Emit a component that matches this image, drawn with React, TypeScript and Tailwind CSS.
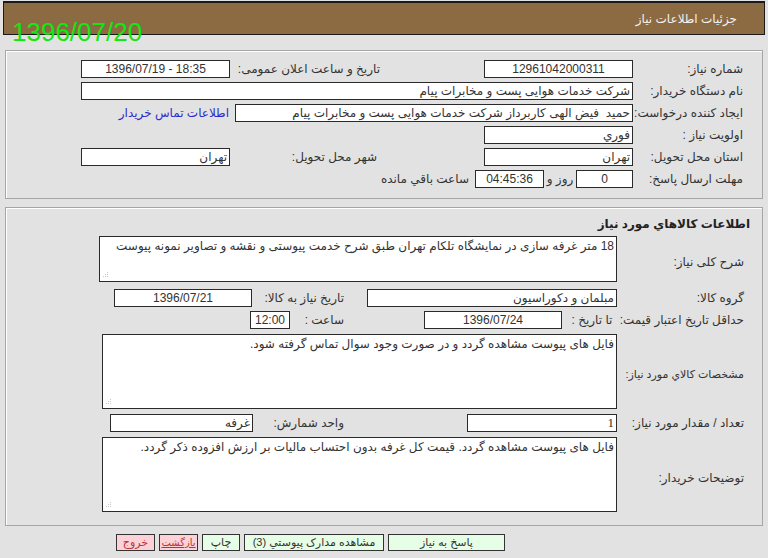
import React from "react";

const FONT = { fontFamily: '"Liberation Sans", "DejaVu Sans", sans-serif' };

function Grip() {
  return (
    <svg width="8" height="8" viewBox="0 0 8 8" className="absolute left-[2px] bottom-[2px]">
      <g fill="#c8c8c8">
        <rect x="5" y="1" width="1" height="1" />
        <rect x="3" y="3" width="1" height="1" />
        <rect x="5" y="3" width="1" height="1" />
        <rect x="1" y="5" width="1" height="1" />
        <rect x="3" y="5" width="1" height="1" />
        <rect x="5" y="5" width="1" height="1" />
      </g>
    </svg>
  );
}

function Field({ className, children, center }: { className: string; children?: React.ReactNode; center?: boolean }) {
  return (
    <div
      className={`h-[18px] shrink-0 bg-white border border-[#2a2a2a] flex items-center px-[2px] text-[12px] text-[#333] overflow-hidden whitespace-pre ${
        center ? "justify-center" : "justify-start"
      } ${className}`}
    >
      {children}
    </div>
  );
}

function Area({ className, children }: { className: string; children?: React.ReactNode }) {
  return (
    <div className={`relative shrink-0 bg-white border border-[#2a2a2a] px-[2px] pt-[1px] text-[12px] leading-[16px] text-[#333] ${className}`}>
      {children}
      <Grip />
    </div>
  );
}

function Label({ className, children }: { className: string; children: React.ReactNode }) {
  return <div className={`shrink-0 text-[#333] whitespace-nowrap ${className}`}>{children}</div>;
}

export default function App() {
  return (
    <div dir="rtl" style={FONT} className="relative w-[768px] h-[558px] bg-[#e2e2e2] overflow-hidden">
      {/* header */}
      <div className="mx-[3px] mt-[1px] h-[34px] bg-[#8c6a42] border border-[#1a1a1a] border-t-2 flex items-center pr-[27px]">
        <span className="text-[12px] text-[#f2f2f2]">جزئیات اطلاعات نیاز</span>
      </div>
      <div dir="ltr" className="absolute left-[12px] top-[17px] text-[26px] leading-[30px] text-[#14e614]">
        1396/07/20
      </div>

      {/* panel 1 */}
      <div className="mx-[5px] mt-[15px] h-[149px] border border-[#a6a6a6] shadow-[inset_1px_1px_0_#fff] pr-[19px] pt-[9px] flex flex-col">
        <div className="h-[22px] flex items-start">
          <Label className="w-[110px] text-[12px] leading-[18px]">شماره نیاز:</Label>
          <Field className="w-[149px]" center>
            <span dir="ltr">12961042000311</span>
          </Field>
          <div className="w-[104px] shrink-0" />
          <Label className="w-[145px] text-[12px] leading-[18px]">تاریخ و ساعت اعلان عمومی:</Label>
          <Field className="w-[149px] mr-[5px]" center>
            <span dir="ltr">1396/07/19 - 18:35</span>
          </Field>
        </div>
        <div className="h-[22px] flex items-start">
          <Label className="w-[110px] text-[12px] leading-[18px]">نام دستگاه خریدار:</Label>
          <Field className="w-[552px]">شرکت خدمات هوایی پست و مخابرات پیام</Field>
        </div>
        <div className="h-[22px] flex items-start">
          <Label className="w-[110px] text-[12px] leading-[18px]">ایجاد کننده درخواست:</Label>
          <Field className="w-[398px]">{"حمید  فیض الهی کاربرداز شرکت خدمات هوایی پست و مخابرات پیام"}</Field>
          <span className="mr-[6px] text-[12px] leading-[18px] text-[#2b2bd0] whitespace-nowrap">اطلاعات تماس خریدار</span>
        </div>
        <div className="h-[22px] flex items-start">
          <Label className="w-[110px] text-[12px] leading-[18px]">اولویت نیاز :</Label>
          <Field className="w-[149px]">فوري</Field>
        </div>
        <div className="h-[22px] flex items-start">
          <Label className="w-[110px] text-[12px] leading-[18px]">استان محل تحویل:</Label>
          <Field className="w-[149px]">تهران</Field>
          <div className="w-[107px] shrink-0" />
          <Label className="w-[142px] text-[12px] leading-[18px]">شهر محل تحویل:</Label>
          <Field className="w-[149px] mr-[5px]">تهران</Field>
        </div>
        <div className="h-[22px] flex items-start">
          <Label className="w-[110px] text-[12px] leading-[18px]">مهلت ارسال پاسخ:</Label>
          <Field className="w-[57px]" center>
            0
          </Field>
          <Label className="w-[32px] text-[12px] leading-[18px] text-center">روز و</Label>
          <Field className="w-[69px]" center>
            <span dir="ltr">04:45:36</span>
          </Field>
          <Label className="mr-[6px] text-[12px] leading-[18px]">ساعت باقي مانده</Label>
        </div>
      </div>

      {/* panel 2 */}
      <div className="mx-[5px] mt-[8px] h-[319px] border border-[#a6a6a6] shadow-[inset_1px_1px_0_#fff] pr-[12px] pt-[5px] flex flex-col">
        <div className="h-[22px] leading-[22px] text-[12px] font-bold text-[#222] mb-[1px]">اطلاعات کالاهاي مورد نياز</div>
        <div className="pr-[6px] flex flex-col">
          <div className="flex items-center h-[46px]">
            <Label className="w-[127px] text-[12px] pt-[6px]">شرح کلی نیاز:</Label>
            <Area className="w-[518px] h-[46px]">
              18 متر غرفه سازی در نمایشگاه تلکام تهران طبق شرح خدمت پیوستی و نقشه و تصاویر نمونه پیوست
            </Area>
          </div>
          <div className="flex items-start h-[18px] mt-[7px]">
            <Label className="w-[127px] text-[12px] leading-[18px]">گروه کالا:</Label>
            <Field className="w-[250px]">مبلمان و دکوراسیون</Field>
            <div className="w-[23px] shrink-0" />
            <Label className="w-[87px] text-[12px] leading-[18px]">تاریخ نیاز به کالا:</Label>
            <Field className="w-[138px] mr-[5px]" center>
              <span dir="ltr">1396/07/21</span>
            </Field>
          </div>
          <div className="flex items-start h-[18px] mt-[4px]">
            <Label className="w-[127px] text-[12px] leading-[18px]">حداقل تاریخ اعتبار قیمت:</Label>
            <Label className="w-[50px] text-[12px] leading-[18px] text-center">تا تاریخ :</Label>
            <Field className="w-[138px] mr-[5px]" center>
              <span dir="ltr">1396/07/24</span>
            </Field>
            <div className="w-[80px] shrink-0" />
            <Label className="w-[50px] text-[12px] leading-[18px]">ساعت :</Label>
            <Field className="w-[40px] mr-[4px]" center>
              <span dir="ltr">12:00</span>
            </Field>
          </div>
          <div className="flex items-center h-[75px] mt-[5px]">
            <Label className="w-[127px] text-[11px] pt-[6px]">مشخصات کالاي مورد نیاز:</Label>
            <Area className="w-[515px] h-[75px]">فایل های پیوست مشاهده گردد و در صورت وجود سوال تماس گرفته شود.</Area>
          </div>
          <div className="flex items-start h-[18px] mt-[5px]">
            <Label className="w-[127px] text-[12px] leading-[18px]">تعداد / مقدار مورد نیاز:</Label>
            <Field className="w-[150px]">
              <span style={{ fontFamily: '"Liberation Serif", serif' }} className="text-[13px]">1</span>
            </Field>
            <div className="w-[123px] shrink-0" />
            <Label className="w-[87px] text-[12px] leading-[18px]">واحد شمارش:</Label>
            <Field className="w-[143px] mr-[4px]">غرفه</Field>
          </div>
          <div className="flex items-center h-[75px] mt-[5px]">
            <Label className="w-[127px] text-[12px] pt-[6px]">توضیحات خریدار:</Label>
            <Area className="w-[515px] h-[75px]">
              فایل های پیوست مشاهده گردد. قیمت کل غرفه بدون احتساب مالیات بر ارزش افزوده ذکر گردد.
            </Area>
          </div>
        </div>
      </div>

      {/* buttons */}
      <div className="mt-[8px] mr-[263px] flex items-start gap-[4px]">
        <div className="w-[117px] h-[17px] bg-[#e6fde6] border border-[#333] text-[11px] leading-[15px] text-center text-[#333]">پاسخ به نیاز</div>
        <div className="w-[140px] h-[17px] bg-[#e6fde6] border border-[#333] text-[11px] leading-[15px] text-center text-[#333]">مشاهده مدارک پیوستي (3)</div>
        <div className="w-[38px] h-[17px] bg-[#e6fde6] border border-[#333] text-[11px] leading-[15px] text-center text-[#333]">چاپ</div>
        <div className="w-[39px] h-[17px] bg-[#fcd2d8] border border-[#333] text-[10px] leading-[15px] text-center text-[#b33] underline overflow-hidden whitespace-nowrap">بازگشت</div>
        <div className="w-[39px] h-[17px] bg-[#fcd2d8] border border-[#333] text-[11px] leading-[15px] text-center text-[#b33]">خروج</div>
      </div>
    </div>
  );
}
